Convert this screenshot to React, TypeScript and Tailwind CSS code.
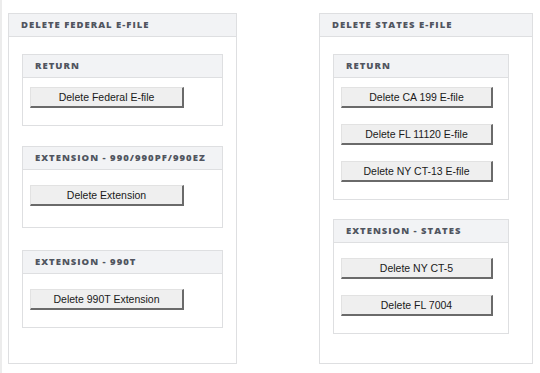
const headFont = { fontFamily: '"Open Sans", "Liberation Sans", sans-serif' }

interface SectionProps {
  title: string
  buttons: string[]
  first?: boolean
  btnWidth: string
  className?: string
}

function DeleteButton({ label, width }: { label: string; width: string }) {
  return (
    <button
      className={`${width} h-[21px] bg-[#efefef] border border-[#e2e2e2] border-r-2 border-b-2 border-r-[#6a6a6a] border-b-[#6a6a6a] text-[10.5px] text-[#1a1a1a] font-['Liberation_Sans',Arial,sans-serif] leading-none`}
    >
      {label}
    </button>
  )
}

function Header({ title }: { title: string }) {
  return (
    <div
      className="h-[23px] flex items-center px-[12px] bg-[#f2f3f5] border-b border-[#dedfe1] text-[9.5px] font-extrabold tracking-[1px] text-[#50555f] uppercase"
      style={headFont}
    >
      {title}
    </div>
  )
}

function Section({ title, buttons, first, btnWidth, className = '' }: SectionProps) {
  return (
    <div className={`border border-[#dedfe1] bg-white ${className}`}>
      <Header title={title} />
      <div className={`flex flex-col gap-[16px] ${first ? 'pt-[9px]' : 'pt-[15px]'} pb-[17px] pl-[7px]`}>
        {buttons.map((b) => (
          <DeleteButton key={b} label={b} width={btnWidth} />
        ))}
      </div>
    </div>
  )
}

function Panel({ title, width, children }: { title: string; width: string; children: React.ReactNode }) {
  return (
    <div className={`${width} border border-[#dedfe1] bg-white flex flex-col`}>
      <Header title={title} />
      <div className="flex flex-col pt-[17px] px-[13px]">{children}</div>
    </div>
  )
}

export default function App() {
  return (
    <div className="w-[540px] h-[373px] bg-white border-l-2 border-[#ececec] pt-[13px] pb-[9px] pl-[6px] flex items-stretch gap-[82px]">
      <Panel title="Delete Federal E-file" width="w-[229px]">
        <Section title="Return" buttons={['Delete Federal E-file']} first btnWidth="w-[154px]" />
        <Section
          title="Extension - 990/990PF/990EZ"
          buttons={['Delete Extension']}
          btnWidth="w-[154px]"
          className="mt-[20px] pb-[4px]"
        />
        <Section
          title="Extension - 990T"
          buttons={['Delete 990T Extension']}
          btnWidth="w-[154px]"
          className="mt-[22px]"
        />
      </Panel>
      <Panel title="Delete States E-file" width="w-[214px]">
        <Section
          title="Return"
          buttons={['Delete CA 199 E-file', 'Delete FL 11120 E-file', 'Delete NY CT-13 E-file']}
          first
          btnWidth="w-[152px]"
          className="w-[176px]"
        />
        <Section
          title="Extension - States"
          buttons={['Delete NY CT-5', 'Delete FL 7004']}
          btnWidth="w-[152px]"
          className="w-[176px] mt-[19px]"
        />
      </Panel>
    </div>
  )
}
